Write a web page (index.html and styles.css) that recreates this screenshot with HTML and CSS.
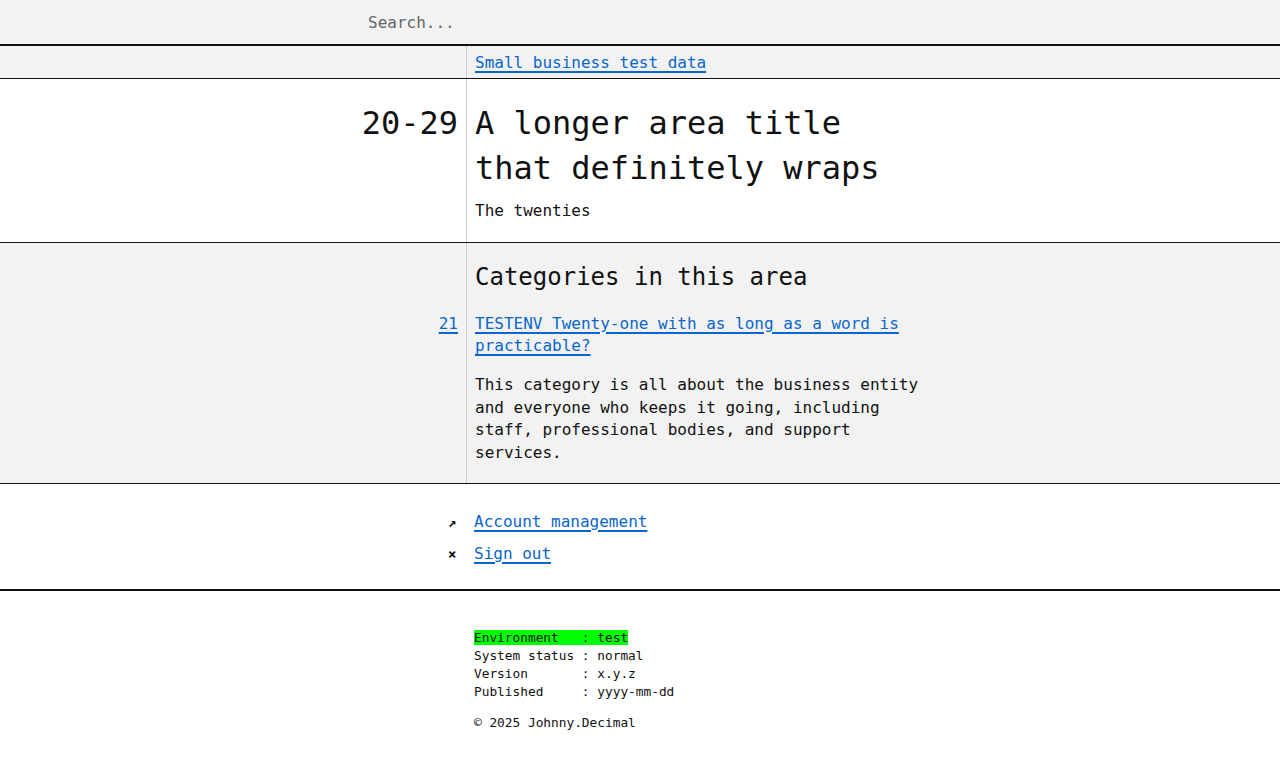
FILE: index.html
```html
<!DOCTYPE html>
<html lang="en">
<head>
<meta charset="utf-8">
<title>20-29 A longer area title that definitely wraps</title>
<link rel="stylesheet" href="styles.css">
</head>
<body>
<header class="search-bar">
  <input class="search-input" type="text" placeholder="Search...">
</header>
<nav class="crumbs">
  <div class="col-left"></div>
  <div class="col-right"><a href="#">Small business test data</a></div>
</nav>
<section class="area">
  <div class="col-left area-id">20-29</div>
  <div class="col-right">
    <h1 class="area-title">A longer area title that definitely wraps</h1>
    <p class="area-sub">The twenties</p>
  </div>
</section>
<section class="cats">
  <div class="col-left"></div>
  <div class="col-right"><h2 class="cats-title">Categories in this area</h2></div>
  <div class="col-left cat-id"><a href="#">21</a></div>
  <div class="col-right cat-body">
    <a class="cat-link" href="#">TESTENV Twenty-one with as long as a word is practicable?</a>
    <p class="cat-desc">This category is all about the business entity and everyone who keeps it going, including staff, professional bodies, and support services.</p>
  </div>
</section>
<section class="menu">
  <ul class="menu-list">
    <li class="menu-item"><span class="menu-icon">↗</span><a href="#">Account management</a></li>
    <li class="menu-item"><span class="menu-icon">×</span><a href="#">Sign out</a></li>
  </ul>
</section>
<footer class="footer">
<pre class="meta"><span class="env">Environment   : test</span>
System status : normal
Version       : x.y.z
Published     : yyyy-mm-dd</pre>
<p class="copy">© 2025 Johnny.Decimal</p>
</footer>
</body>
</html>
```
FILE: styles.css
```css
* { box-sizing: border-box; }
html, body { margin: 0; padding: 0; }
body {
  font-family: "DejaVu Sans Mono", "Liberation Mono", monospace;
  font-size: 16px;
  line-height: 1.4;
  color: #111;
  background: #fff;
}
a {
  color: #0a66cc;
  text-decoration: underline;
  text-decoration-thickness: 2px;
  text-underline-offset: 3px;
}
.search-bar {
  height: 46px;
  background: #f2f2f2;
  border-bottom: 2px solid #111;
  display: flex;
  align-items: center;
}
.search-input {
  margin-left: 360px;
  padding: 0 8px;
  height: 40px;
  width: 500px;
  border: none;
  background: transparent;
  font-family: inherit;
  font-size: 16px;
  color: #111;
  outline: none;
}
.search-input::placeholder { color: #666; }

.crumbs, .area, .cats {
  display: grid;
  grid-template-columns: 467px 1fr;
}
.col-left {
  border-right: 1px solid #ccc;
  text-align: right;
  padding-right: 8px;
}
.col-right { padding: 0 8px; }

.crumbs {
  background: #f2f2f2;
  height: 33px;
  border-bottom: 1px solid #111;
  align-items: stretch;
}
.crumbs .col-right { display: flex; align-items: center; padding-top: 3px; }

.area {
  border-bottom: 1px solid #111;
}
.area .col-left, .area .col-right { padding-top: 22px; padding-bottom: 20px; }
.area-id { font-size: 32px; line-height: 1.4; }
.area-title {
  margin: 0 0 9px;
  font-size: 32px;
  font-weight: normal;
  line-height: 1.4;
  max-width: 456px;
}
.area-sub { margin: 0; }

.cats {
  background: #f2f2f2;
  border-bottom: 1px solid #111;
}
.cats-title {
  margin: 18px 0 18px;
  font-size: 24px;
  font-weight: normal;
  line-height: 1.4;
}
.cat-body { padding-bottom: 19px; max-width: 472px; }
.cat-desc { margin: 17px 0 0; max-width: 456px; }

.menu {
  border-bottom: 2px solid #111;
  padding: 27px 0 24px;
}
.menu-list { list-style: none; margin: 0; padding: 0 0 0 448px; }
.menu-item { display: flex; align-items: baseline; }
.menu-item + .menu-item { margin-top: 9.6px; }
.menu-icon { width: 26px; font-size: 14px; font-weight: bold; color: #111; }

.footer { padding: 38px 0 30px 474px; }
.meta {
  margin: 0;
  font-family: inherit;
  font-size: 12.8px;
  line-height: 18px;
  color: #111;
}
.env { background: #00ff00; }
.copy {
  margin: 13px 0 0;
  font-size: 12.8px;
  line-height: 18px;
}
```
